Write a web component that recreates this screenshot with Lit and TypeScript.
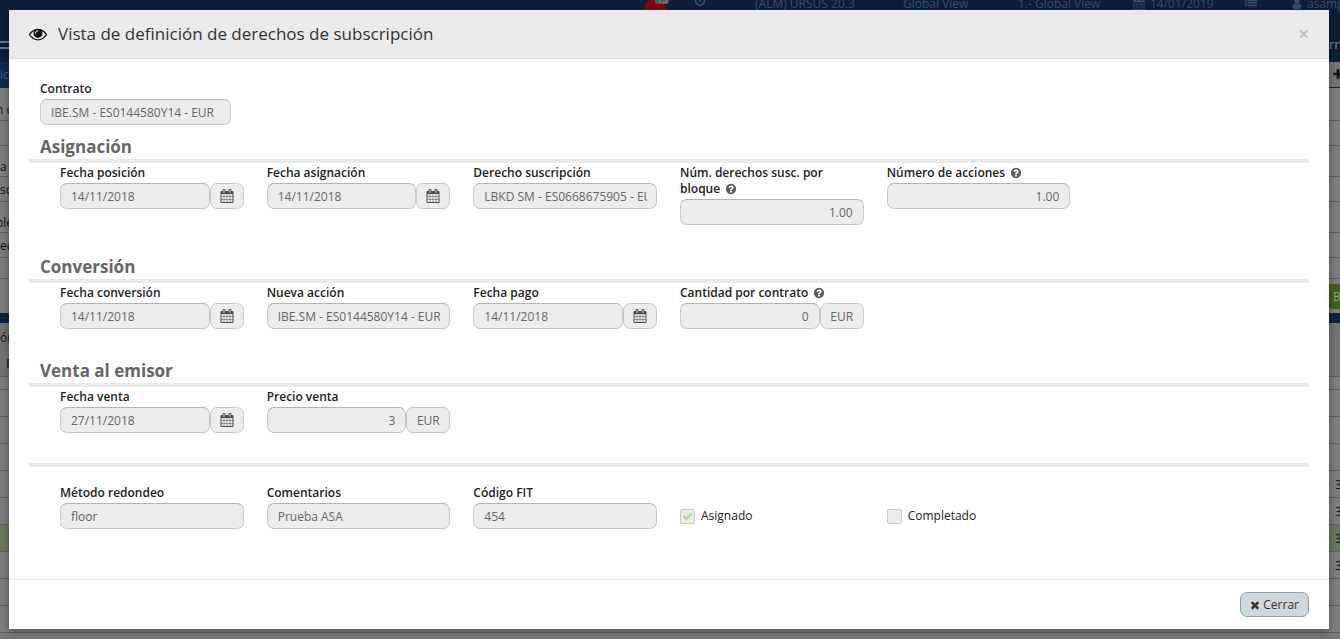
import { LitElement, html, css, svg, nothing } from "lit";
import { customElement, property } from "lit/decorators.js";
import { classMap } from "lit/directives/class-map.js";
import { styleMap } from "lit/directives/style-map.js";

const ICONS: Record<string, string> = {
  eye: "M1664 960q-152-236-381-353 61 104 61 225 0 185-131.5 316.5t-316.5 131.5-316.5-131.5-131.5-316.5q0-121 61-225-229 117-381 353 133 205 333.5 326.5t434.5 121.5 434.5-121.5 333.5-326.5zm-720-384q0-20-14-34t-34-14q-125 0-214.5 89.5t-89.5 214.5q0 20 14 34t34 14 34-14 14-34q0-86 61-147t147-61q20 0 34-14t14-34zm848 384q0 34-20 69-140 230-376.5 368.5t-499.5 138.5-499.5-139-376.5-368q-20-35-20-69t20-69q140-229 376.5-368t499.5-139 499.5 139 376.5 368q20 35 20 69z",
  calendar: "M192 1664h288v-288h-288v288zm352 0h320v-288h-320v288zm-352-352h288v-320h-288v320zm352 0h320v-320h-320v320zm-352-384h288v-288h-288v288zm736 736h320v-288h-320v288zm-384-736h320v-288h-320v288zm768 736h288v-288h-288v288zm-384-352h320v-320h-320v320zm-352-864v-288q0-13-9.5-22.5t-22.5-9.5h-64q-13 0-22.5 9.5t-9.5 22.5v288q0 13 9.5 22.5t22.5 9.5h64q13 0 22.5-9.5t9.5-22.5zm736 864h288v-320h-288v320zm-384-384h320v-288h-320v288zm384 0h288v-288h-288v288zm32-480v-288q0-13-9.5-22.5t-22.5-9.5h-64q-13 0-22.5 9.5t-9.5 22.5v288q0 13 9.5 22.5t22.5 9.5h64q13 0 22.5-9.5t9.5-22.5zm384-64v1280q0 52-38 90t-90 38h-1408q-52 0-90-38t-38-90v-1280q0-52 38-90t90-38h128v-96q0-66 47-113t113-47h64q66 0 113 47t47 113v96h384v-96q0-66 47-113t113-47h64q66 0 113 47t47 113v96h128q52 0 90 38t38 90z",
  help: "M1024 1376v-192q0-14-9-23t-23-9h-192q-14 0-23 9t-9 23v192q0 14 9 23t23 9h192q14 0 23-9t9-23zm256-672q0-88-55.5-163t-138.5-116-170-41q-243 0-371 213-15 24 8 42l132 100q7 6 19 6 16 0 25-12 53-68 86-92 34-24 86-24 48 0 85.5 26t37.5 59q0 38-20 61t-68 45q-63 28-115.5 86.5t-52.5 125.5v36q0 14 9 23t23 9h192q14 0 23-9t9-23q0-19 21.5-49.5t54.5-49.5q32-18 49-28.5t46-35 44.5-48 28-60.5 12.5-81zm384 192q0 209-103 385.5t-279.5 279.5-385.5 103-385.5-103-279.5-279.5-103-385.5 103-385.5 279.5-279.5 385.5-103 385.5 103 279.5 279.5 103 385.5z",
  times: "M1490 1322q0 40-28 68l-136 136q-28 28-68 28t-68-28l-294-294-294 294q-28 28-68 28t-68-28l-136-136q-28-28-28-68t28-68l294-294-294-294q-28-28-28-68t28-68l136-136q28-28 68-28t68 28l294 294 294-294q28-28 68-28t68 28l136 136q28 28 28 68t-28 68l-294 294 294 294q28 28 28 68z",
  check: "M1671 566q0 40-28 68l-724 724-136 136q-28 28-68 28t-68-28l-136-136-362-362q-28-28-28-68t28-68l136-136q28-28 68-28t68 28l294 295 656-657q28-28 68-28t68 28l136 136q28 28 28 68z",
  user: "M1536 1399q0 109-62.5 187t-150.5 78h-854q-88 0-150.5-78t-62.5-187q0-85 8.5-160.5t31.5-152 58.5-131 94-89 134.5-34.5q131 128 313 128t313-128q76 0 134.5 34.5t94 89 58.5 131 31.5 152 8.5 160.5zm-256-887q0 159-112.5 271.5t-271.5 112.5-271.5-112.5-112.5-271.5 112.5-271.5 271.5-112.5 271.5 112.5 112.5 271.5z",
  list: "M0 256h256v256h-256zM384 256h1408v256h-1408zM0 640h256v256h-256zM384 640h1408v256h-1408zM0 1024h256v256h-256zM384 1024h1408v256h-1408zM0 1408h256v256h-256zM384 1408h1408v256h-1408z",
  clock: "M896 128a768 768 0 1 0 1 0zM896 352a544 544 0 1 1-1 0zM832 480h192v512h-384v-160h192z",
  alert: "M896 0L1792 1792H0z",
  plus: "M700 200h392v500h500v392h-500v500h-392v-500h-500v-392h500z",
};

const icon = (name: string, cls = "icon") => html`
  <svg class=${cls} viewBox="0 0 1792 1792" aria-hidden="true">
    ${svg`<path fill="currentColor" fill-rule=${name === "clock" ? "evenodd" : "nonzero"} d=${ICONS[name]} />`}
  </svg>
`;

interface Field {
  label: string;
  value: string;
  kind?: "text" | "date" | "amount" | "number";
  help?: boolean;
}

const ASIGNACION: Field[] = [
  { label: "Fecha posición", value: "14/11/2018", kind: "date" },
  { label: "Fecha asignación", value: "14/11/2018", kind: "date" },
  { label: "Derecho suscripción", value: "LBKD SM - ES0668675905 - EUR" },
  { label: "Núm. derechos susc. por bloque", value: "1.00", kind: "number", help: true },
  { label: "Número de acciones", value: "1.00", kind: "number", help: true },
];
const CONVERSION: Field[] = [
  { label: "Fecha conversión", value: "14/11/2018", kind: "date" },
  { label: "Nueva acción", value: "IBE.SM - ES0144580Y14 - EUR" },
  { label: "Fecha pago", value: "14/11/2018", kind: "date" },
  { label: "Cantidad por contrato", value: "0", kind: "amount", help: true },
];
const VENTA: Field[] = [
  { label: "Fecha venta", value: "27/11/2018", kind: "date" },
  { label: "Precio venta", value: "3", kind: "amount" },
];
const OTROS: Field[] = [
  { label: "Método redondeo", value: "floor" },
  { label: "Comentarios", value: "Prueba ASA" },
  { label: "Código FIT", value: "454" },
];

@customElement("form-field")
class FormField extends LitElement {
  @property({ attribute: false }) field!: Field;

  static styles = css`
    :host { display: block; min-width: 0; }
    * { box-sizing: border-box; }
    .label {
      display: block;
      margin-bottom: 2px;
      font-size: 12px;
      line-height: 16px;
      font-weight: 600;
      color: #222;
    }
    .help { width: 12px; height: 12px; margin-left: 2px; vertical-align: -2px; color: #5c5c5c; }
    .group { display: flex; }
    .input, .addon {
      height: 26px;
      border: 1px solid #c8c8c8;
      border-top-color: #b4b4b4;
      border-radius: 7px;
      background: #ececec;
      color: #666;
      font-family: inherit;
      font-size: 12px;
    }
    .input { flex: 1; width: 100%; min-width: 0; padding: 0 9px 0 10px; }
    .right { padding-right: 10px; text-align: right; }
    .addon { flex: none; display: grid; place-items: center; padding: 0; border-top-color: #c8c8c8; }
    .pick { width: 34px; color: #4c4c4c; }
    .unit { width: 44px; }
    .icon { width: 14px; height: 14px; }
  `;

  render() {
    const { label, value, kind, help } = this.field;
    const right = kind === "number" || kind === "amount";
    return html`
      <label class="label" for="control">${label} ${help ? icon("help", "help") : nothing}</label>
      <div class="group">
        <input id="control" class=${classMap({ input: true, right })} type="text" .value=${value} disabled />
        ${kind === "date"
          ? html`<button class="addon pick" type="button" disabled aria-label="Abrir calendario">${icon("calendar")}</button>`
          : nothing}
        ${kind === "amount" ? html`<span class="addon unit">EUR</span>` : nothing}
      </div>
    `;
  }
}

interface Band { h: number; tone: string; left?: string; right?: string }

const BANDS: Band[] = [
  { h: 33, tone: "low shifted", left: "n c" },
  { h: 25, tone: "plain" },
  { h: 31, tone: "low", left: "a" },
  { h: 25, tone: "plain", left: "sca" },
  { h: 31, tone: "low shifted", left: "ble" },
  { h: 25, tone: "plain", left: "ecc" },
  { h: 21, tone: "plain" },
  { h: 34, tone: "action" },
  { h: 10, tone: "navy" },
  { h: 28, tone: "head", left: "ón" },
  { h: 26, tone: "headline", left: "F" },
  { h: 13, tone: "plain" },
  { h: 27, tone: "plain" },
  { h: 27, tone: "plain" },
  { h: 27, tone: "plain" },
  { h: 27, tone: "plain", right: "3" },
  { h: 27, tone: "plain", right: "3" },
  { h: 27, tone: "green", right: "3" },
  { h: 27, tone: "plain", right: "3" },
  { h: 27, tone: "plain" },
  { h: 27, tone: "plain" },
];

@customElement("page-backdrop")
class PageBackdrop extends LitElement {
  static styles = css`
    :host {
      display: flex;
      flex-direction: column;
      min-width: 0;
      overflow: hidden;
      background: #787878;
      color: #111;
      font-size: 12px;
    }
    * { box-sizing: border-box; }
    .top { display: flex; height: 36px; background: #0b2037; color: #34506e; }
    .nav { display: flex; align-items: flex-start; margin: -5px 0 0 auto; line-height: 18px; white-space: nowrap; }
    .item { display: flex; align-items: center; gap: 5px; flex: none; }
    .icon { flex: none; width: 12px; height: 12px; }
    .w46 { width: 46px; }
    .w49 { width: 49px; gap: 4px; }
    .w51 { width: 51px; align-items: flex-start; gap: 0; }
    .w61 { width: 61px; }
    .w148 { width: 148px; }
    .w115 { width: 115px; }
    .w112 { width: 112px; }
    .alert { flex: none; width: 24px; height: 24px; margin-top: -9px; color: #7d0a0e; }
    .badge {
      margin-left: -12px;
      padding: 0 2px;
      border-radius: 2px;
      background: #555;
      color: #999;
      font-size: 9px;
      line-height: 9px;
    }
    .brand { display: flex; justify-content: space-between; height: 26px; background: #0b2037; line-height: 16px; }
    .mark { width: 9px; height: 8px; margin-top: 5px; border: solid #777; border-width: 2px 0; }
    .link { width: 11px; overflow: hidden; color: #7d8ea0; font-size: 13px; }
    .tabs { display: flex; justify-content: space-between; height: 26px; background: #0d2c4b; color: #3b6288; line-height: 26px; }
    .add { width: 11px; height: 25px; padding: 6px 0 0 3px; background: #747474; color: #111; line-height: 12px; }
    .band { display: flex; justify-content: space-between; align-items: center; flex: none; border-bottom: 1px solid #606060; background: #7e7e7e; }
    .low { padding-top: 10px; }
    .shifted { text-indent: -4px; }
    .start { width: 9px; overflow: hidden; white-space: nowrap; }
    .end { width: 11px; padding-left: 6px; overflow: hidden; }
    .action { border: 0; }
    .navy { border: 0; background: #0b2541; }
    .head { border: 0; background: #747474; }
    .headline { background: #747474; color: #0b2541; font-weight: 600; text-indent: 6px; }
    .green { background: #6b785c; }
    .go { width: 11px; height: 25px; padding-left: 4px; overflow: hidden; background: #3d6318; color: #999; line-height: 25px; }
  `;

  render() {
    return html`
      <div class="top">
        <div class="nav">
          <span class="item w51">${icon("alert", "alert")}<span class="badge">13</span></span>
          <span class="item w61">${icon("clock")}</span>
          <span class="item w148">(ALM) URSUS 20.3</span>
          <span class="item w115">Global View</span>
          <span class="item w115">1.- Global View</span>
          <span class="item w112">${icon("calendar")}14/01/2019</span>
          <span class="item w46">${icon("list")}</span>
          <span class="item w49">${icon("user")}asampe</span>
        </div>
      </div>
      <div class="brand"><span class="mark"></span><span class="link">rr</span></div>
      <div class="tabs"><span class="start">ico</span><span class="add">${icon("plus")}</span></div>
      ${BANDS.map(
        (b) => html`
          <div class="band ${b.tone}" style=${styleMap({ height: `${b.h}px` })}>
            <span class="start">${b.left ?? ""}</span>
            ${b.tone === "action" ? html`<span class="go">B</span>` : b.right ? html`<span class="end">${b.right}</span>` : nothing}
          </div>
        `
      )}
    `;
  }
}

@customElement("app-root")
class AppRoot extends LitElement {
  static styles = css`
    :host {
      display: grid;
      grid-template-columns: minmax(0, 1fr);
      min-height: 100vh;
      overflow: hidden;
      font-family: "Open Sans", "Noto Sans", sans-serif;
      font-size: 12px;
      color: #222;
    }
    * { box-sizing: border-box; }
    .backdrop, .dialog { grid-area: 1 / 1; }
    .backdrop { height: 0; min-height: 100%; }
    .dialog {
      z-index: 1;
      align-self: start;
      margin: 10px 11px 10px 9px;
      background: #fff;
      box-shadow: 0 2px 8px rgba(0, 0, 0, 0.4);
    }
    .header {
      display: flex;
      align-items: center;
      gap: 11px;
      height: 49px;
      padding: 0 20px;
      border-bottom: 1px solid #ddd;
      background: #eaeaea;
    }
    .eye { width: 18px; height: 18px; color: #111; }
    .title { flex: 1; margin: 0; font-size: 17px; font-weight: 400; line-height: 24px; color: #333; }
    .close { padding: 0; border: 0; background: none; color: #c0c0c0; font: 600 19px/20px "Open Sans", sans-serif; }
    .body { padding: 22px 20px 50px; }
    .contract { width: 202px; padding-left: 11px; }
    .heading {
      margin: 0;
      padding: 10px 11px 0;
      border-bottom: 4px solid #eaeaea;
      font-size: 17px;
      line-height: 24px;
      font-weight: 700;
      color: #666;
    }
    .row {
      display: grid;
      grid-template-columns: repeat(6, minmax(0, 1fr));
      gap: 23px;
      align-items: start;
      padding: 2px 32px 20px 31px;
    }
    .divider { margin: 10px 0 16px; border: 0; border-top: 4px solid #eaeaea; }
    .last { padding-bottom: 0; }
    .tick { display: flex; align-items: center; gap: 6px; margin-top: 23px; line-height: 16px; color: #222; }
    .box { display: grid; place-items: center; width: 15px; height: 15px; }
    .box > * { grid-area: 1 / 1; }
    .check { appearance: none; width: 15px; height: 15px; margin: 0; border: 1px solid #ccc; border-radius: 2px; background: #ececec; }
    .mark { z-index: 1; width: 11px; height: 11px; color: #b5d98a; }
    .footer { display: flex; justify-content: flex-end; padding: 12px 20px; border-top: 1px solid #e5e5e5; }
    .button {
      display: flex;
      align-items: center;
      gap: 2px;
      height: 25px;
      padding: 0 9px 0 8px;
      border: 1px solid #8aa5b1;
      border-radius: 7px;
      background: #cfd8dc;
      color: #333;
      font-family: inherit;
      font-size: 12px;
    }
    .icon { width: 12px; height: 12px; }
  `;

  private fields(list: Field[]) {
    return list.map((f) => html`<form-field .field=${f}></form-field>`);
  }

  private tick(label: string, checked: boolean) {
    return html`
      <label class="tick">
        <span class="box">
          <input class="check" type="checkbox" .checked=${checked} disabled />
          ${checked ? icon("check", "mark") : nothing}
        </span>
        ${label}
      </label>
    `;
  }

  render() {
    return html`
      <page-backdrop class="backdrop" aria-hidden="true"></page-backdrop>
      <section class="dialog" role="dialog" aria-modal="true" aria-labelledby="title">
        <header class="header">
          ${icon("eye", "eye")}
          <h1 class="title" id="title">Vista de definición de derechos de subscripción</h1>
          <button class="close" type="button" aria-label="Cerrar">×</button>
        </header>
        <div class="body">
          <form-field class="contract" .field=${{ label: "Contrato", value: "IBE.SM - ES0144580Y14 - EUR" }}></form-field>
          <h2 class="heading">Asignación</h2>
          <div class="row">${this.fields(ASIGNACION)}</div>
          <h2 class="heading">Conversión</h2>
          <div class="row">${this.fields(CONVERSION)}</div>
          <h2 class="heading">Venta al emisor</h2>
          <div class="row">${this.fields(VENTA)}</div>
          <hr class="divider" />
          <div class="row last">
            ${this.fields(OTROS)} ${this.tick("Asignado", true)} ${this.tick("Completado", false)}
          </div>
        </div>
        <footer class="footer">
          <button class="button" type="button">${icon("times")}Cerrar</button>
        </footer>
      </section>
    `;
  }
}
